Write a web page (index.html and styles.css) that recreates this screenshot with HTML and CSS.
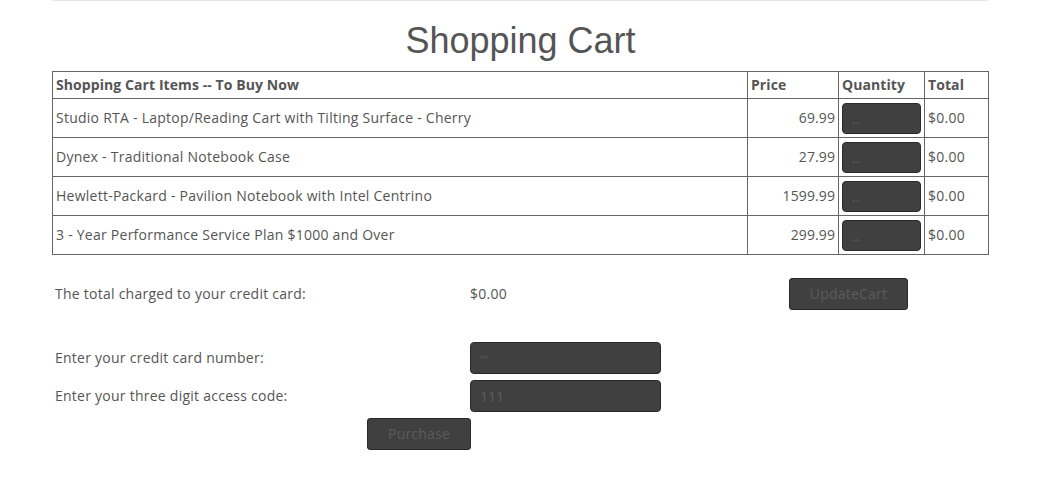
FILE: index.html
```html
<!DOCTYPE html>
<html>
<head>
<meta charset="utf-8">
<link rel="stylesheet" href="styles.css">
</head>
<body>
<div class="page">
  <div class="rule"></div>
  <h1 class="title">Shopping Cart</h1>
  <table class="cart">
    <thead>
      <tr>
        <th class="c-item">Shopping Cart Items -- To Buy Now</th>
        <th class="c-price">Price</th>
        <th class="c-qty">Quantity</th>
        <th class="c-total">Total</th>
      </tr>
    </thead>
    <tbody>
      <tr>
        <td>Studio RTA - Laptop/Reading Cart with Tilting Surface - Cherry</td>
        <td class="num">69.99</td>
        <td class="qty"><input class="field qty-in" placeholder=".."></td>
        <td>$0.00</td>
      </tr>
      <tr>
        <td>Dynex - Traditional Notebook Case</td>
        <td class="num">27.99</td>
        <td class="qty"><input class="field qty-in" placeholder=".."></td>
        <td>$0.00</td>
      </tr>
      <tr>
        <td>Hewlett-Packard - Pavilion Notebook with Intel Centrino</td>
        <td class="num">1599.99</td>
        <td class="qty"><input class="field qty-in" placeholder=".."></td>
        <td>$0.00</td>
      </tr>
      <tr>
        <td>3 - Year Performance Service Plan $1000 and Over</td>
        <td class="num">299.99</td>
        <td class="qty"><input class="field qty-in" placeholder=".."></td>
        <td>$0.00</td>
      </tr>
    </tbody>
  </table>

  <div class="checkout">
    <div class="label">The total charged to your credit card:</div>
    <div class="value">$0.00</div>
    <div class="act"><button class="btn update">UpdateCart</button></div>

    <div class="label row2">Enter your credit card number:</div>
    <div class="value row2"><input class="field wide cc" placeholder="&quot;&quot;"></div>
    <div class="row2"></div>

    <div class="label">Enter your three digit access code:</div>
    <div class="value"><input class="field wide" placeholder="111"></div>
    <div></div>

    <div class="buy"><button class="btn purchase">Purchase</button></div>
  </div>
</div>
</body>
</html>
```
FILE: styles.css
```css
* { box-sizing: border-box; }
html, body { margin: 0; padding: 0; background: #fff; }
body {
  font-family: "Open Sans", "Liberation Sans", sans-serif;
  font-size: 14px;
  line-height: 20px;
  color: #555;
  letter-spacing: 0.25px;
}
.page {
  width: 937px;
  margin-left: 52px;
}
.rule {
  height: 1px;
  width: 936px;
  background: #e8e8e8;
}
.title {
  font-family: "Liberation Sans", Arial, sans-serif;
  font-weight: normal;
  font-size: 36px;
  line-height: 40px;
  color: #555;
  text-align: center;
  letter-spacing: 0;
  margin: 20px 0 10px;
}
.cart {
  width: 936px;
  border-collapse: collapse;
  table-layout: fixed;
}
.cart th, .cart td {
  border: 1px solid #666;
  padding: 3px;
  text-align: left;
  vertical-align: middle;
}
.cart th { font-weight: 700; line-height: 20px; letter-spacing: 0.08px; }
.c-item { width: 695px; }
.c-price { width: 91px; }
.c-qty { width: 86px; }
.c-total { width: 64px; }
.cart td { height: 39px; }
.cart td.num { text-align: right; letter-spacing: 0.1px; }
.field {
  background: #404040;
  border: 1px solid #2a2a2a;
  border-radius: 4px;
  color: #ccc;
  font-family: "Open Sans", "Liberation Sans", sans-serif;
  font-size: 14px;
  padding: 0 9px;
  outline: none;
}
.field::placeholder { color: #5e5e5e; }
.qty-in {
  display: block;
  width: 100%;
  height: 31px;
}
.checkout {
  display: grid;
  grid-template-columns: 418px 319px auto;
  align-items: center;
  row-gap: 6px;
  margin-top: 23px;
}
.label { padding-left: 3px; }
.row2 { margin-top: 26px; }
.wide {
  display: block;
  width: 191px;
  height: 32px;
}
.cc::placeholder { font-size: 10px; }
.btn {
  display: block;
  background: #404040;
  border: 1px solid #2a2a2a;
  border-radius: 3px;
  color: #5c5c5c;
  font-family: "Open Sans", "Liberation Sans", sans-serif;
  font-size: 14px;
  letter-spacing: 0.2px;
  height: 32px;
  padding: 0 0 1px;
}
.update { width: 119px; }
.buy {
  grid-column: 1;
  justify-self: end;
  margin-right: -1px;
}
.purchase { width: 104px; }
```
